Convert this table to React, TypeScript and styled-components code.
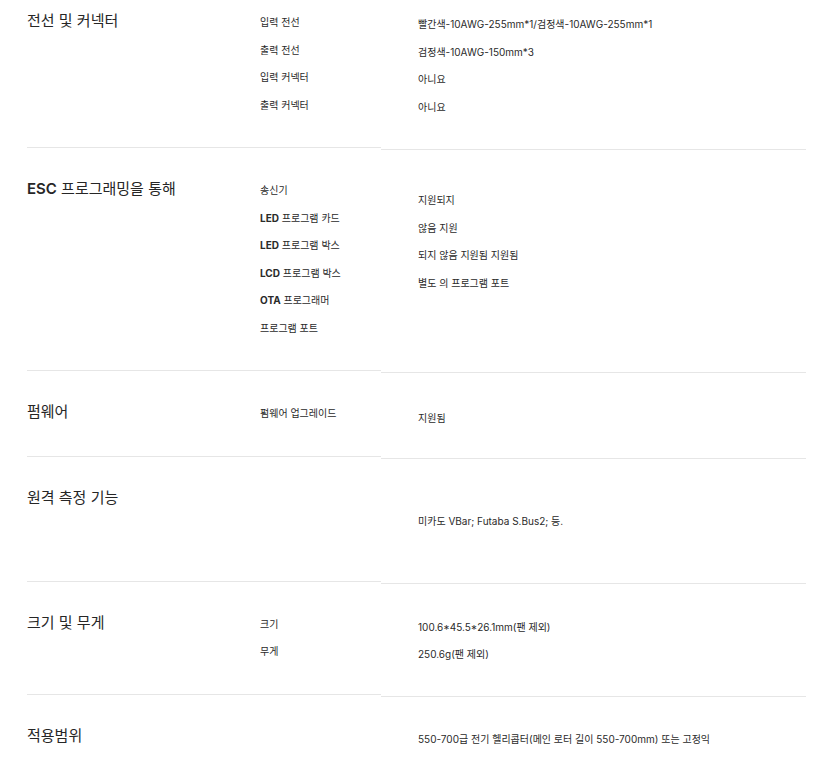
import styled, { createGlobalStyle } from "styled-components";

const GlobalStyle = createGlobalStyle`
  html, body {
    margin: 0;
    padding: 0;
    background: #fff;
  }
  body {
    font-family: Inter, "Noto Sans CJK KR", sans-serif;
    color: #222;
  }
`;

const Page = styled.div`
  width: 779px;
  padding-left: 27px;
  margin-top: -20px;
`;

const Row = styled.section<{ $minHeight?: number }>`
  display: flex;
  min-height: ${(p) => p.$minHeight ?? 0}px;
`;

const Spec = styled.div`
  display: flex;
  width: 354px;
  flex-shrink: 0;
  padding: 29px 0 28px;
  border-bottom: 1px solid #e6e6e6;
`;

const Title = styled.h3`
  width: 233px;
  margin: 0;
  font-size: 15px;
  font-weight: 400;
  line-height: 24px;
  color: #262626;

  b {
    font-weight: 600;
  }
`;

const List = styled.ul`
  margin: 0;
  padding: 0;
  list-style: none;
`;

const Item = styled.li`
  font-size: 10px;
  line-height: 27.5px;
  color: #2a2a2a;
  white-space: nowrap;

  b {
    font-weight: 700;
  }
`;

const Values = styled.div<{ $top?: number }>`
  flex: 1;
  padding: ${(p) => p.$top ?? 32}px 0 24px 37px;
  margin-bottom: -2px;
  border-bottom: 1px solid #e6e6e6;
`;

type Section = {
  title: React.ReactNode;
  labels: React.ReactNode[];
  values: string[];
  valueTop?: number;
  minHeight?: number;
};

const sections: Section[] = [
  {
    title: "전선 및 커넥터",
    labels: ["입력 전선", "출력 전선", "입력 커넥터", "출력 커넥터"],
    values: [
      "빨간색-10AWG-255mm*1/검정색-10AWG-255mm*1",
      "검정색-10AWG-150mm*3",
      "아니요",
      "아니요",
    ],
    valueTop: 31,
  },
  {
    title: (
      <>
        <b>ESC</b> 프로그래밍을 통해
      </>
    ),
    labels: [
      "송신기",
      <>
        <b>LED</b> 프로그램 카드
      </>,
      <>
        <b>LED</b> 프로그램 박스
      </>,
      <>
        <b>LCD</b> 프로그램 박스
      </>,
      <>
        <b>OTA</b> 프로그래머
      </>,
      "프로그램 포트",
    ],
    values: ["지원되지", "않음 지원", "되지 않음 지원됨 지원됨", "별도 의 프로그램 포트"],
    valueTop: 39,
  },
  {
    title: "펌웨어",
    labels: ["펌웨어 업그레이드"],
    values: ["지원됨"],
    valueTop: 34,
  },
  {
    title: "원격 측정 기능",
    labels: [],
    values: ["미카도 VBar; Futaba S.Bus2; 등."],
    valueTop: 51,
    minHeight: 125,
  },
  {
    title: "크기 및 무게",
    labels: ["크기", "무게"],
    values: ["100.6*45.5*26.1mm(팬 제외)", "250.6g(팬 제외)"],
  },
  {
    title: "적용범위",
    labels: [],
    values: ["550-700급 전기 헬리콥터(메인 로터 길이 550-700mm) 또는 고정익"],
    valueTop: 31,
  },
];

export default function App() {
  return (
    <>
      <GlobalStyle />
      <Page>
        {sections.map((s, i) => (
          <Row key={i} $minHeight={s.minHeight}>
            <Spec>
              <Title>{s.title}</Title>
              <List>
                {s.labels.map((l, j) => (
                  <Item key={j}>{l}</Item>
                ))}
              </List>
            </Spec>
            <Values $top={s.valueTop}>
              <List>
                {s.values.map((v, j) => (
                  <Item key={j}>{v}</Item>
                ))}
              </List>
            </Values>
          </Row>
        ))}
      </Page>
    </>
  );
}
